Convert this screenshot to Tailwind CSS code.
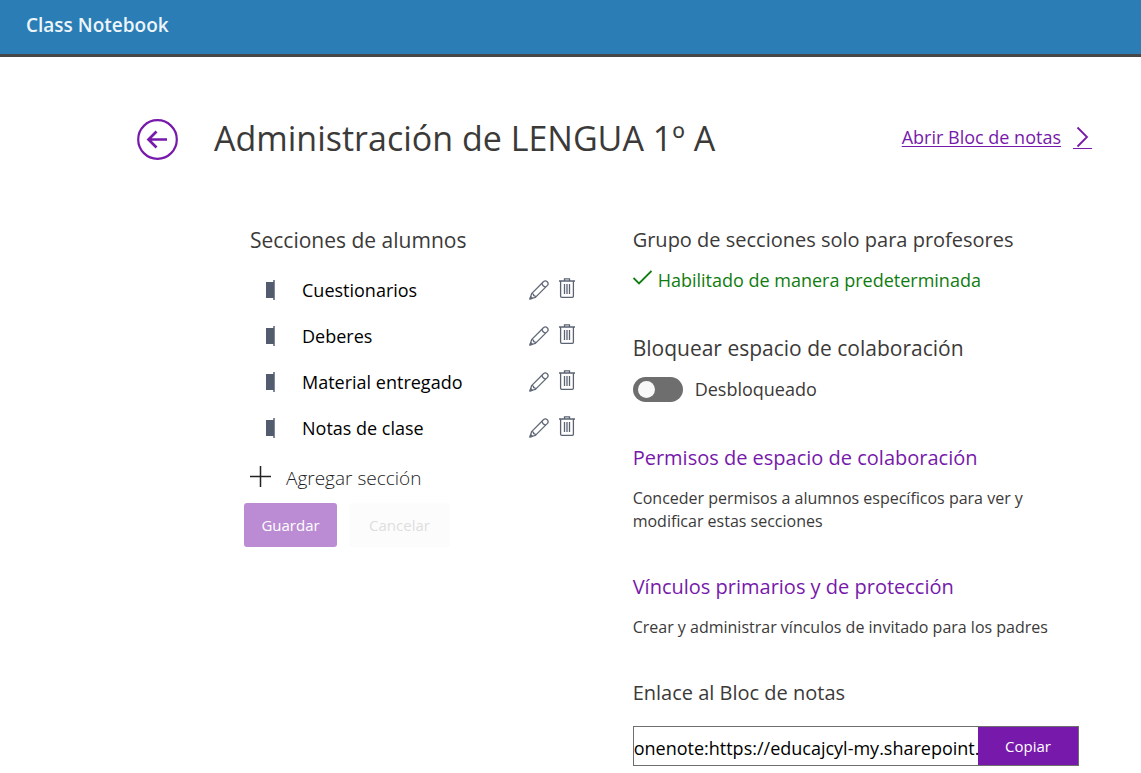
<!DOCTYPE html>
<html lang="es">
<head>
    <meta charset="UTF-8">
    <meta name="viewport" content="width=device-width, initial-scale=1.0">
    <title>Class Notebook</title>
    <script src="https://cdn.jsdelivr.net/npm/@tailwindcss/browser@4"></script>
</head>
<body class="bg-white font-['Open_Sans','Noto_Sans',sans-serif] text-[#3b3a39]">
    <!-- Icons -->
    <svg class="hidden">
        <symbol id="book" viewBox="0 0 10 20">
            <path d="M0 2h7v16H0z" fill="#535c6f"/>
            <path d="M7 0h2v20H7z" fill="#7f8796"/>
            <path d="M7 2h1v16H7z" fill="#535c6f"/>
        </symbol>
        <symbol id="pencil" viewBox="0 0 20 20" fill="none" stroke="#626978" stroke-width="1.3" stroke-linejoin="round">
            <path d="M1 19l1.6-5.4L14.4 1.8a2.6 2.6 0 0 1 3.8 3.8L6.4 17.4z"/>
            <path d="M2.6 13.6c1.6 0 2.2.7 2 2 1.3-.1 1.9.5 1.8 1.8M13 3.2c.3 2.4 1.4 3.5 3.8 3.8"/>
            <path d="M1 19l.7-2.4L3.4 18.3z" fill="#626978"/>
        </symbol>
        <symbol id="trash" viewBox="0 0 16 20" fill="none" stroke="#5b6373" stroke-width="1.3">
            <path d="M0 3h16M5.5 3V.8h5V3M1.6 3v15.2q0 1.1 1.1 1.1h10.6q1.1 0 1.1-1.1V3M5.5 6v10M8 6v10M10.5 6v10"/>
        </symbol>
    </svg>

    <header class="h-[57px] bg-[#2a7eb5] border-b-3 border-[#474747] px-[26px] pt-3">
        <span class="block text-[19px] leading-[26px] font-semibold text-[#eef5fa]">Class Notebook</span>
    </header>

    <main class="pl-[137px] pr-[49px] pt-[58px]">
        <!-- Title row -->
        <div class="flex items-start">
            <button type="button" aria-label="Volver" class="mr-9">
                <svg class="w-[41px] h-12" viewBox="0 0 41 48" fill="none" stroke="#7719aa" stroke-width="2.2">
                    <circle cx="20.5" cy="24.5" r="19.3"/>
                    <path d="M11.5 24.5H30M19.5 16.5l-8 8 8 8" stroke-width="2.7"/>
                </svg>
            </button>
            <h1 class="text-[34px] leading-[46px]">Administración de LENGUA 1º A</h1>
            <a href="#" class="ml-auto flex items-center gap-3 pt-2 text-lg text-[#7719aa]">
                <span class="underline underline-offset-2">Abrir Bloc de notas</span>
                <svg class="w-[19px] h-6" viewBox="0 0 19 24" fill="none" stroke="#7719aa">
                    <path d="M4.5 2.5l9.500 9.500-9.500 9.500" stroke-width="1.8"/>
                    <path d="M0 23.5h19"/>
                </svg>
            </a>
        </div>

        <div class="grid grid-cols-[11fr_13fr] pl-[107px] pt-[63px]">
            <!-- Student sections -->
            <section>
                <h2 class="pl-1.5 text-[21px] leading-7">Secciones de alumnos</h2>
                <ul class="pt-[13px] pl-[22px] pr-[58px] text-lg text-black">
                    <li class="flex items-center h-[46px]">
                        <svg class="w-[10px] h-5 mr-[26px]"><use href="#book"/></svg>
                        <span>Cuestionarios</span>
                        <button type="button" aria-label="Editar Cuestionarios" class="ml-auto mr-2.5"><svg class="w-5 h-5"><use href="#pencil"/></svg></button>
                        <button type="button" aria-label="Eliminar Cuestionarios" class="pb-1"><svg class="w-4 h-5"><use href="#trash"/></svg></button>
                    </li>
                    <li class="flex items-center h-[46px]">
                        <svg class="w-[10px] h-5 mr-[26px]"><use href="#book"/></svg>
                        <span>Deberes</span>
                        <button type="button" aria-label="Editar Deberes" class="ml-auto mr-2.5"><svg class="w-5 h-5"><use href="#pencil"/></svg></button>
                        <button type="button" aria-label="Eliminar Deberes" class="pb-1"><svg class="w-4 h-5"><use href="#trash"/></svg></button>
                    </li>
                    <li class="flex items-center h-[46px]">
                        <svg class="w-[10px] h-5 mr-[26px]"><use href="#book"/></svg>
                        <span>Material entregado</span>
                        <button type="button" aria-label="Editar Material entregado" class="ml-auto mr-2.5"><svg class="w-5 h-5"><use href="#pencil"/></svg></button>
                        <button type="button" aria-label="Eliminar Material entregado" class="pb-1"><svg class="w-4 h-5"><use href="#trash"/></svg></button>
                    </li>
                    <li class="flex items-center h-[46px]">
                        <svg class="w-[10px] h-5 mr-[26px]"><use href="#book"/></svg>
                        <span>Notas de clase</span>
                        <button type="button" aria-label="Editar Notas de clase" class="ml-auto mr-2.5"><svg class="w-5 h-5"><use href="#pencil"/></svg></button>
                        <button type="button" aria-label="Eliminar Notas de clase" class="pb-1"><svg class="w-4 h-5"><use href="#trash"/></svg></button>
                    </li>
                </ul>
                <button type="button" class="flex items-center gap-[15px] pl-1.5 pt-[13px] text-[19px] leading-7 font-light text-[#222222]">
                    <svg class="w-[21px] h-7" viewBox="0 0 21 28" fill="none" stroke="#222222" stroke-width="1.5"><path d="M0 12.5h21M10.5 2v21"/></svg>
                    <span>Agregar sección</span>
                </button>
                <div class="flex gap-3 pt-[11px]">
                    <button type="button" class="w-[93px] h-11 rounded-[3px] bg-[#bb8cd4] text-[15px] text-white">Guardar</button>
                    <button type="button" class="w-[101px] h-11 rounded-[3px] bg-[#fcfcfc] text-[15px] text-[#dedede]">Cancelar</button>
                </div>
            </section>

            <!-- Notebook settings -->
            <section>
                <h2 class="text-xl leading-7">Grupo de secciones solo para profesores</h2>
                <p class="flex items-center gap-1.5 pt-3 text-lg leading-7 text-[#107c10]">
                    <svg class="w-[19px] h-6" viewBox="0 0 19 24" fill="none" stroke="#107c10" stroke-width="1.8"><path d="M.5 10l5.500 5.500L18.500 3"/></svg>
                    <span>Habilitado de manera predeterminada</span>
                </p>

                <h2 class="pt-10 text-[21px] leading-7">Bloquear espacio de colaboración</h2>
                <label class="flex items-center gap-3 pt-[13px] text-lg leading-7">
                    <input type="checkbox" role="switch" class="appearance-none w-[50px] h-[25px] rounded-full bg-[#6e6e6e] before:block before:w-[17px] before:h-[17px] before:m-1 before:ml-[5px] before:rounded-full before:bg-[#f8f8f8] checked:bg-[#7719aa] checked:before:ml-7">
                    <span>Desbloqueado</span>
                </label>

                <h2 class="pt-[41px] text-xl leading-7"><a href="#" class="text-[#7719aa]">Permisos de espacio de colaboración</a></h2>
                <p class="pt-[15px] text-base leading-[23px]">Conceder permisos a alumnos específicos para ver y modificar estas secciones</p>

                <h2 class="pt-10 text-xl leading-7"><a href="#" class="text-[#7719aa]">Vínculos primarios y de protección</a></h2>
                <p class="pt-[15px] text-base leading-[23px]">Crear y administrar vínculos de invitado para los padres</p>

                <h2 class="pt-10 text-xl leading-7"><label for="link">Enlace al Bloc de notas</label></h2>
                <div class="flex h-10 mt-[19px] mr-[13px] border border-[#6e6e6e]">
                    <input id="link" type="text" readonly value="onenote:https://educajcyl-my.sharepoint.com/personal/lengua" class="flex-1 min-w-0 pt-1 text-lg text-black outline-none">
                    <button type="button" class="w-[100px] bg-[#7719aa] text-[15px] text-white">Copiar</button>
                </div>
            </section>
        </div>
    </main>
</body>
</html>
